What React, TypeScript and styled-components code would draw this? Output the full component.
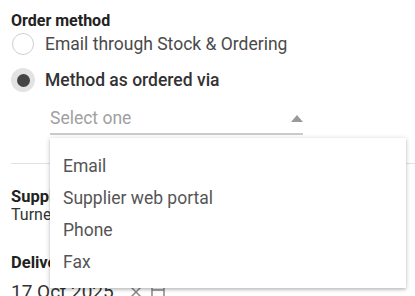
import React from 'react';
import styled, { createGlobalStyle } from 'styled-components';

const GlobalStyle = createGlobalStyle`
  body {
    margin: 0;
    background: #ffffff;
    font-family: Roboto, 'Noto Sans', sans-serif;
    overflow: hidden;
  }
`;

const Page = styled.div`
  width: 415px;
  height: 296px;
  overflow: hidden;
  box-sizing: border-box;
  padding-top: 11px;
`;

const Section = styled.div`
  padding-left: 11px;
`;

const Title = styled.div`
  font-size: 16px;
  font-weight: 700;
  color: #222;
  line-height: 19px;
`;

const RadioRow = styled.label<{ $gap?: number }>`
  display: flex;
  align-items: center;
  gap: 10px;
  height: 24px;
  margin-top: ${({ $gap }) => $gap ?? 0}px;
`;

const RadioCircle = styled.span<{ $checked?: boolean }>`
  display: flex;
  justify-content: center;
  align-items: center;
  box-sizing: border-box;
  width: ${({ $checked }) => ($checked ? 24 : 22)}px;
  height: ${({ $checked }) => ($checked ? 24 : 22)}px;
  margin-left: ${({ $checked }) => ($checked ? 0 : 1)}px;
  margin-right: ${({ $checked }) => ($checked ? 0 : 1)}px;
  border-radius: 50%;
  border: ${({ $checked }) => ($checked ? 'none' : '1.5px solid #cfcfcf')};
  background: ${({ $checked }) => ($checked ? '#e3e3e3' : '#fff')};

  &::after {
    content: '';
    display: ${({ $checked }) => ($checked ? 'block' : 'none')};
    width: 13px;
    height: 13px;
    border-radius: 50%;
    background: #454545;
  }
`;

const RadioLabel = styled.span<{ $strong?: boolean }>`
  font-size: 17.5px;
  font-weight: ${({ $strong }) => ($strong ? 500 : 400)};
  color: ${({ $strong }) => ($strong ? '#333' : '#4a4a4a')};
`;

const SelectWrap = styled.div`
  position: relative;
  margin: 11px 0 0 39px;
  width: 253px;
`;

const SelectBox = styled.div`
  display: flex;
  justify-content: space-between;
  align-items: center;
  height: 30px;
  border-bottom: 2px solid #cbcbcb;
`;

const Placeholder = styled.span`
  font-size: 17.5px;
  color: #a0a0a0;
`;

const Arrow = styled.span`
  width: 0;
  height: 0;
  border-left: 6px solid transparent;
  border-right: 6px solid transparent;
  border-bottom: 7px solid #9a9a9a;
`;

const Menu = styled.ul`
  position: absolute;
  top: 35px;
  left: 0;
  width: 356px;
  margin: 0;
  padding: 12px 0 10px;
  list-style: none;
  background: #fff;
  box-shadow: 0 1px 5px rgba(0, 0, 0, 0.22), 0 2px 2px rgba(0, 0, 0, 0.1);
  z-index: 10;
`;

const MenuItem = styled.li`
  height: 32px;
  display: flex;
  align-items: center;
  padding-left: 13px;
  font-size: 17.5px;
  color: #555;
`;

const Divider = styled.hr`
  margin: 28px 0 0 11px;
  border: none;
  border-top: 1px solid #e2e2e2;
`;

const Field = styled.div<{ $gap: number }>`
  padding-left: 11px;
  margin-top: ${({ $gap }) => $gap}px;
`;

const FieldLabel = styled.div`
  font-size: 16.5px;
  font-weight: 700;
  color: #222;
  line-height: 19px;
`;

const FieldValue = styled.div<{ $big?: boolean }>`
  display: flex;
  align-items: center;
  gap: 14px;
  font-size: ${({ $big }) => ($big ? 19 : 16)}px;
  color: #333;
  line-height: ${({ $big }) => ($big ? 24 : 17)}px;
  margin-top: ${({ $big }) => ($big ? 8 : 0)}px;
`;

const IconGroup = styled.span`
  display: flex;
  gap: 6px;
  color: #888;
`;

const App: React.FC = () => {
  return (
    <Page>
      <GlobalStyle />
      <Section>
        <Title>Order method</Title>
        <RadioRow $gap={2}>
          <RadioCircle />
          <RadioLabel>Email through Stock &amp; Ordering</RadioLabel>
        </RadioRow>
        <RadioRow $gap={12}>
          <RadioCircle $checked />
          <RadioLabel $strong>Method as ordered via</RadioLabel>
        </RadioRow>
        <SelectWrap>
          <SelectBox>
            <Placeholder>Select one</Placeholder>
            <Arrow />
          </SelectBox>
          <Menu>
            <MenuItem>Email</MenuItem>
            <MenuItem>Supplier web portal</MenuItem>
            <MenuItem>Phone</MenuItem>
            <MenuItem>Fax</MenuItem>
          </Menu>
        </SelectWrap>
      </Section>
      <Divider />
      <Field $gap={23}>
        <FieldLabel>Supplier</FieldLabel>
        <FieldValue>Turner Bros</FieldValue>
      </Field>
      <Field $gap={30}>
        <FieldLabel>Delivery date</FieldLabel>
        <FieldValue $big>
          17 Oct 2025
          <IconGroup>
            <svg width="16" height="16" viewBox="0 0 16 16" fill="none" stroke="#888" strokeWidth="1.5">
              <path d="M3 3l10 10M13 3L3 13" />
            </svg>
            <svg width="16" height="16" viewBox="0 0 16 16" fill="none" stroke="#888" strokeWidth="1.5">
              <rect x="2" y="3" width="12" height="11" />
              <path d="M2 6h12M5 1v3M11 1v3" />
            </svg>
          </IconGroup>
        </FieldValue>
      </Field>
    </Page>
  );
};

export default App;
